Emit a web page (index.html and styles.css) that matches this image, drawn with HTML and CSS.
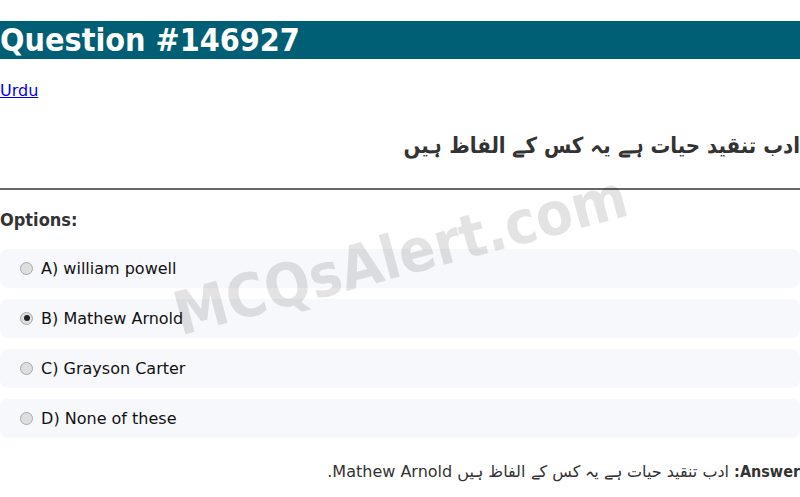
FILE: index.html
```html
<!DOCTYPE html>
<html lang="en">
<head>
<meta charset="utf-8">
<title>Question #146927</title>
<link rel="stylesheet" href="styles.css">
</head>
<body>
<div class="page">
  <h1 class="title">Question #146927</h1>
  <p class="lang"><a href="#">Urdu</a></p>
  <h2 class="question" dir="rtl">ادب تنقید حیات ہے یہ کس کے الفاظ ہیں</h2>
  <hr class="rule">
  <h3 class="options-title">Options:</h3>
  <ul class="options">
    <li class="option"><label><input class="radio" type="radio" name="opt" disabled> A) william powell</label></li>
    <li class="option"><label><input class="radio" type="radio" name="opt" checked disabled> B) Mathew Arnold</label></li>
    <li class="option"><label><input class="radio" type="radio" name="opt" disabled> C) Grayson Carter</label></li>
    <li class="option"><label><input class="radio" type="radio" name="opt" disabled> D) None of these</label></li>
  </ul>
  <p class="answer" dir="rtl"><strong class="answer-label">Answer:</strong> ادب تنقید حیات ہے یہ کس کے الفاظ ہیں Mathew Arnold.</p>
  <div class="watermark">MCQsAlert.com</div>
</div>
</body>
</html>
```
FILE: styles.css
```css
html, body {
  margin: 0;
  padding: 0;
  background: #ffffff;
}
body {
  font-family: "DejaVu Sans", sans-serif;
  color: #333333;
}
.page {
  position: relative;
  overflow: hidden;
}
.title,
.question,
.options-title,
.answer-label,
.watermark {
  font-family: "DejaVu Sans Condensed", "DejaVu Sans", sans-serif;
  font-stretch: semi-condensed;
  font-weight: bold;
}
.title {
  margin: 21.44px 0;
  font-size: 32px;
  color: #ffffff;
  background: #005f74;
}
.lang {
  margin: 16px 0;
  font-size: 16px;
}
.lang a {
  color: #0000ee;
}
.question {
  margin: 0;
  padding: 17px 0 15px 0;
  font-size: 22px;
  text-align: right;
  color: #333333;
}
.rule {
  margin: 15px 0 0 0;
  border: 0;
  border-top: 2px solid #666666;
}
.options-title {
  margin: 19px 0 19px 0;
  font-size: 18px;
}
.options {
  list-style: none;
  margin: 0;
  padding: 0;
  display: flex;
  flex-direction: column;
  gap: 11px;
}
.option {
  background: #f7f8fc;
  border-radius: 8px;
  padding: 10px 15px;
  font-size: 16px;
  line-height: 19px;
  color: #111111;
}
.option label {
  display: flex;
  align-items: center;
  white-space: pre;
}
.radio {
  appearance: none;
  -webkit-appearance: none;
  width: 13px;
  height: 13px;
  margin: 0 3px 0 5px;
  border: 1px solid #a8a8a8;
  border-radius: 50%;
  background: #dedede;
  box-sizing: border-box;
  display: inline-flex;
  align-items: center;
  justify-content: center;
  flex: none;
}
.radio:checked::after {
  content: "";
  width: 6px;
  height: 6px;
  border-radius: 50%;
  background: #222222;
}
.answer {
  margin: 24px 0;
  font-size: 16px;
  text-align: right;
}
.watermark {
  position: absolute;
  left: 184px;
  top: 279px;
  font-size: 60px;
  line-height: 70px;
  color: rgba(0, 0, 0, 0.11);
  transform: rotate(-15deg);
  transform-origin: 0 100%;
  pointer-events: none;
  white-space: nowrap;
}
```
